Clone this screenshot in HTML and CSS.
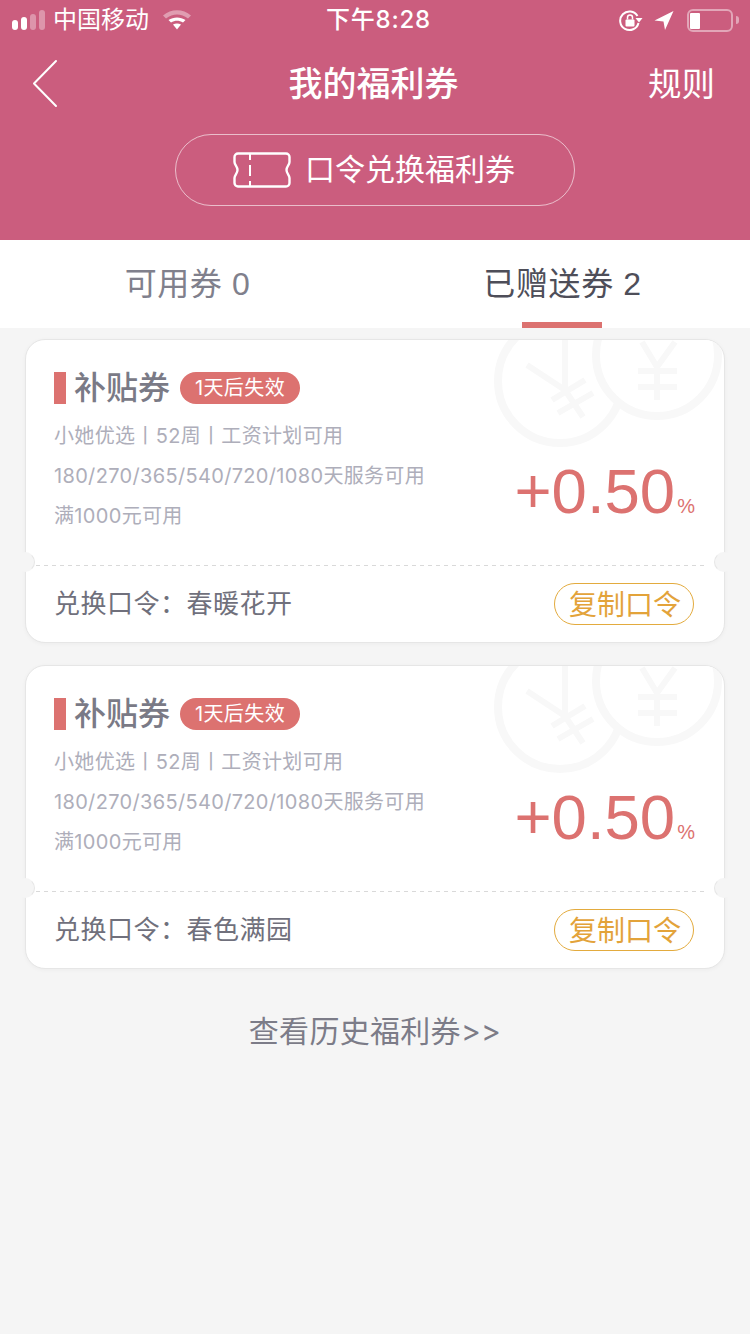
FILE: index.html
```html
<!DOCTYPE html>
<html lang="zh">
<head>
<meta charset="utf-8">
<title>我的福利券</title>
<link rel="stylesheet" href="styles.css">
</head>
<body>
<header class="hero">
  <div class="status">
    <div class="status-left">
      <span class="signal"><i class="on"></i><i class="on"></i><i></i><i></i></span>
      <span class="carrier">中国移动</span>
      <svg class="wifi" width="30" height="22" viewBox="0 0 30 22"><path d="M1 6.500C9 -0.500 21 -0.500 29 6.500L26 9.500C19 4 11 4 4 9.500Z" fill="#fff" opacity=".4"/><path d="M6.500 11C11.500 7.500 18.500 7.500 23.500 11L21 13.500C17 11 13 11 9 13.500Z" fill="#fff"/><path d="M11 15.500C13.500 14 16.500 14 19 15.500L15 20.500Z" fill="#fff"/></svg>
    </div>
    <div class="clock">下午8:28</div>
    <div class="status-right">
      <svg width="25" height="24" viewBox="0 0 25 24"><path d="M19.500 8A9.300 9.300 0 1 0 20.500 15" fill="none" stroke="#fff" stroke-width="2"/><path d="M17.500 10H24.500L21 14.500Z" fill="#fff"/><rect x="7.500" y="11.500" width="9" height="7" rx="1" fill="#fff"/><path d="M9.500 11.500V9.500a2.500 2.500 0 0 1 5 0V11.500" fill="none" stroke="#fff" stroke-width="1.500"/></svg>
      <svg class="loc" width="20" height="20" viewBox="0 0 20 20"><path d="M19.500 1L0.500 10.500L9.500 11.500L11 20Z" fill="#fff"/></svg>
      <span class="battery"><span class="battery-fill"></span></span><span class="battery-tip"></span>
    </div>
  </div>
  <nav class="nav">
    <svg class="back" width="26" height="50" viewBox="0 0 26 50"><path d="M24 2L2 24.500L24 47" fill="none" stroke="#fff" stroke-width="2" stroke-linecap="round" stroke-linejoin="round"/></svg>
    <h1 class="title">我的福利券</h1>
    <span class="rule">规则</span>
  </nav>
  <div class="redeem-wrap">
    <div class="redeem">
      <svg width="58" height="36" viewBox="0 0 58 36"><path d="M5 1.500H53a3.500 3.500 0 0 1 3.500 3.500V10C56.500 13 53.500 14.500 53.500 18C53.500 21.500 56.500 23 56.500 26V31a3.500 3.500 0 0 1-3.500 3.500H5A3.500 3.500 0 0 1 1.500 31V26C1.500 23 4.500 21.500 4.500 18C4.500 14.500 1.500 13 1.500 10V5A3.500 3.500 0 0 1 5 1.500Z" fill="none" stroke="#fff" stroke-width="2.400"/><path d="M17 1V8M17 13V24M17 29V35" fill="none" stroke="#fff" stroke-width="2"/></svg>
      <span>口令兑换福利券</span>
    </div>
  </div>
</header>
<div class="tabs">
  <div class="tab">可用券 0</div>
  <div class="tab active">已赠送券 2</div>
</div>
<main class="list">
  <article class="card">
    <svg class="coins" width="232" height="110" viewBox="0 0 232 110"><g fill="none" stroke="#f8f8f8"><circle cx="68" cy="41" r="62" stroke-width="8"/><circle cx="165" cy="15" r="61" stroke-width="8" fill="#fff"/><path d="M35 25L73 50M73 0V50M73 50L91 77M60 60L93 40M66 73L101 53" stroke-width="6"/><path d="M150 2L165 27M183 2L165 27M165 27V60M146 31H185M146 47H185" stroke-width="6"/></g></svg>
    <div class="card-top">
      <div class="card-head">
        <span class="mark"></span>
        <span class="card-title">补贴券</span>
        <span class="badge">1天后失效</span>
      </div>
      <div class="card-body">
        <div class="lines">
          <p>小她优选丨52周丨工资计划可用</p>
          <p>180/270/365/540/720/1080天服务可用</p>
          <p>满1000元可用</p>
        </div>
        <div class="rate">+0.50<small>%</small></div>
      </div>
    </div>
    <div class="divider"><span class="notch notch-l"></span><span class="notch notch-r"></span></div>
    <div class="card-foot">
      <span class="code">兑换口令：春暖花开</span>
      <span class="copy">复制口令</span>
    </div>
  </article>
  <article class="card">
    <svg class="coins" width="232" height="110" viewBox="0 0 232 110"><g fill="none" stroke="#f8f8f8"><circle cx="68" cy="41" r="62" stroke-width="8"/><circle cx="165" cy="15" r="61" stroke-width="8" fill="#fff"/><path d="M35 25L73 50M73 0V50M73 50L91 77M60 60L93 40M66 73L101 53" stroke-width="6"/><path d="M150 2L165 27M183 2L165 27M165 27V60M146 31H185M146 47H185" stroke-width="6"/></g></svg>
    <div class="card-top">
      <div class="card-head">
        <span class="mark"></span>
        <span class="card-title">补贴券</span>
        <span class="badge">1天后失效</span>
      </div>
      <div class="card-body">
        <div class="lines">
          <p>小她优选丨52周丨工资计划可用</p>
          <p>180/270/365/540/720/1080天服务可用</p>
          <p>满1000元可用</p>
        </div>
        <div class="rate">+0.50<small>%</small></div>
      </div>
    </div>
    <div class="divider"><span class="notch notch-l"></span><span class="notch notch-r"></span></div>
    <div class="card-foot">
      <span class="code">兑换口令：春色满园</span>
      <span class="copy">复制口令</span>
    </div>
  </article>
  <div class="history">查看历史福利券&gt;&gt;</div>
</main>
</body>
</html>
```
FILE: styles.css
```css
* { box-sizing: border-box; }
html, body { margin: 0; padding: 0; }
body {
  width: 750px;
  height: 1334px;
  overflow: hidden;
  background: #f5f5f5;
  font-family: "Inter", "Noto Sans CJK SC", sans-serif;
}
.hero { height: 240px; background: #cb5d7e; color: #fff; }
.status {
  height: 40px;
  padding: 0 11px 0 12px;
  display: grid;
  grid-template-columns: 1fr auto 1fr;
  align-items: center;
}
.status-left { display: flex; align-items: center; }
.signal { display: flex; align-items: flex-end; gap: 3px; width: 33px; height: 20px; }
.signal i { width: 6px; background: rgba(255,255,255,.35); border-radius: 3px; }
.signal i:nth-child(1) { height: 10px; }
.signal i:nth-child(2) { height: 13px; }
.signal i:nth-child(3) { height: 16px; }
.signal i:nth-child(4) { height: 20px; }
.signal i.on { background: #fff; }
.carrier { margin-left: 8px; font-size: 24px; line-height: 40px; }
.wifi { margin-left: 13px; }
.clock { font-size: 24px; font-weight: 500; line-height: 40px; letter-spacing: .8px; margin-left: 6px; }
.status-right { display: flex; align-items: center; justify-content: flex-end; }
.loc { margin-left: 11px; }
.battery {
  margin-left: 13px;
  width: 46px;
  height: 23px;
  border: 2px solid rgba(255,255,255,.45);
  border-radius: 6px;
  padding: 2px 0 1px 1px;
  display: flex;
}
.battery-fill { width: 10px; background: #fff; border-radius: 1px; }
.battery-tip { width: 3px; height: 8px; margin-left: 3px; background: rgba(255,255,255,.45); border-radius: 0 3px 3px 0; }
.nav {
  height: 70px;
  margin-top: 9px;
  padding: 0 35px 0 32px;
  display: grid;
  grid-template-columns: 1fr auto 1fr;
  align-items: center;
}
.back { display: block; }
.title { margin: 0; font-size: 34px; font-weight: 500; line-height: 70px; }
.rule { justify-self: end; font-size: 33.500px; line-height: 70px; }
.redeem-wrap { margin-top: 15px; display: flex; justify-content: center; }
.redeem {
  width: 400px;
  height: 72px;
  border: 1px solid rgba(255,255,255,.6);
  border-radius: 36px;
  display: flex;
  align-items: center;
  justify-content: center;
  gap: 14px;
  font-size: 30px;
  padding-right: 2px;
}
.redeem span { margin-top: -7px; }
.tabs { height: 88px; background: #fff; display: flex; }
.tab {
  position: relative;
  flex: 1;
  text-align: center;
  font-size: 32px;
  line-height: 88px;
  color: #80808c;
  font-family: "Liberation Sans", "Noto Sans CJK SC", sans-serif;
  letter-spacing: .6px;
}
.tab.active { color: #4e4e59; }
.tab.active::after {
  content: "";
  position: absolute;
  left: 147px;
  bottom: 0;
  width: 80px;
  height: 6px;
  background: #dc7270;
}
.list { padding: 11px 25px 0; }
.card {
  position: relative;
  height: 304px;
  margin-bottom: 22px;
  background: #fff;
  border: 1px solid #e6e6e6;
  border-radius: 20px;
  box-shadow: 0 1px 4px rgba(0,0,0,.04);
}
.coins { position: absolute; right: 0; top: 0; border-top-right-radius: 19px; }
.card-top { position: relative; height: 225px; padding: 32px 28px 0; }
.card-head { display: flex; align-items: center; height: 32px; }
.mark { width: 12px; height: 32px; background: #dc7270; }
.card-title { margin-left: 8px; font-size: 32px; font-weight: 500; color: #7a7a86; line-height: 34px; }
.badge {
  margin-left: 10px;
  width: 120px;
  height: 32px;
  border-radius: 16px;
  background: #dc7270;
  color: #fff;
  font-size: 20px;
  line-height: 32px;
  letter-spacing: .4px;
  text-align: center;
}
.card-body { display: flex; justify-content: space-between; align-items: flex-end; }
.lines { padding-top: 12px; }
.lines p { margin: 0; font-size: 20px; line-height: 40px; color: #aeaeba; letter-spacing: .33px; }
.rate {
  margin-right: 1px;
  margin-bottom: -5px;
  font-family: "Liberation Sans", sans-serif;
  font-size: 63.500px;
  line-height: 70px;
  color: #dc7270;
  white-space: nowrap;
}
.rate small { font-size: 20px; margin-left: 2px; }
.divider {
  position: relative;
  height: 1px;
  margin: 0 20px 0 10px;
  background: repeating-linear-gradient(90deg, #d9d9d9 0 4px, transparent 4px 8px);
}
.notch {
  position: absolute;
  top: -13px;
  width: 20px;
  height: 20px;
  border-radius: 50%;
  background: #f5f5f5;
  border: 1px solid transparent;
}
.notch-l { left: -21px; border-right-color: #e6e6e6; }
.notch-r { right: -30px; border-left-color: #e6e6e6; }
.card-foot {
  height: 76px;
  padding: 0 30px 0 28px;
  display: flex;
  align-items: center;
  justify-content: space-between;
}
.code { font-size: 26px; color: #70707c; letter-spacing: .5px; margin-top: -5px; }
.copy {
  width: 140px;
  height: 42px;
  padding-left: 2px;
  border: 1px solid #e3ab3e;
  border-radius: 21px;
  color: #e3a33a;
  font-size: 28px;
  line-height: 42px;
  text-align: center;
  margin-top: -1px;
}
.history {
  margin-top: 42px;
  text-align: center;
  font-size: 30px;
  letter-spacing: .3px;
  line-height: 40px;
  color: #7c7c88;
}
```
